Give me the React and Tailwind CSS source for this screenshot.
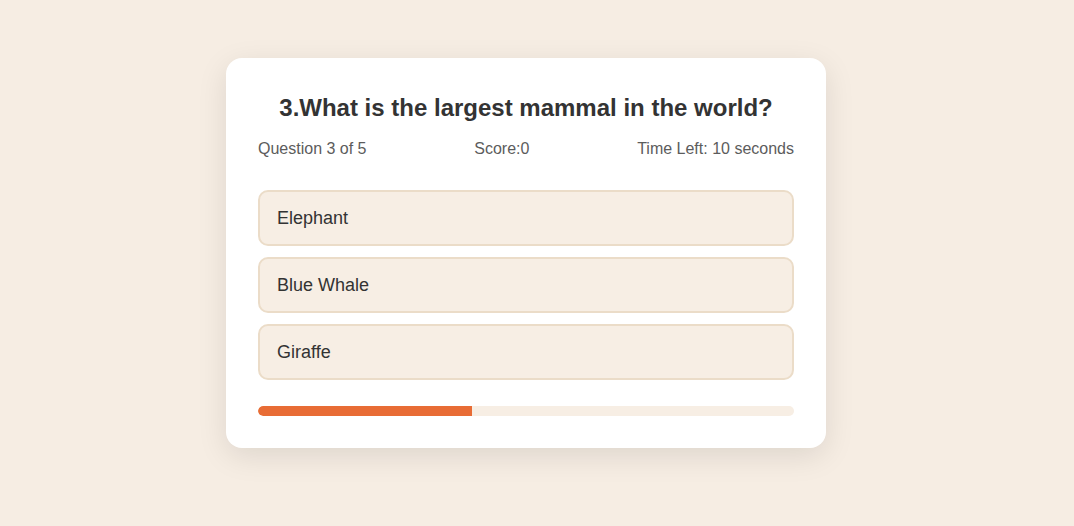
export default function App() {
  const options = ["Elephant", "Blue Whale", "Giraffe"];
  const progress = 40;

  return (
    <div className="min-h-screen bg-[#f6ede3] pr-[22px] pt-[58px] font-['Liberation_Sans',Arial,sans-serif]">
      <div className="mx-auto w-[600px] rounded-2xl bg-white px-8 pt-8 pb-8 shadow-[0_8px_30px_rgba(0,0,0,0.1)]">
        <h2 className="mt-[2px] text-center text-2xl font-bold text-[#333]">
          3.What is the largest mammal in the world?
        </h2>
        <div className="mt-[13px] flex justify-between text-base text-[#5c5c5c]">
          <span>Question 3 of 5</span>
          <span>Score:0</span>
          <span>Time Left: 10 seconds</span>
        </div>
        <div className="mt-[29px] flex flex-col gap-[11px]">
          {options.map((opt) => (
            <button
              key={opt}
              className="h-14 rounded-[10px] border-2 border-[#ebdcc8] bg-[#f7eee4] px-[17px] text-left text-lg text-[#333]"
            >
              {opt}
            </button>
          ))}
        </div>
        <div className="mt-[26px] h-2.5 overflow-hidden rounded-full bg-[#f7eee4]">
          <div className="h-full rounded-l-full bg-[#e86c35]" style={{ width: `${progress}%` }} />
        </div>
      </div>
    </div>
  );
}
